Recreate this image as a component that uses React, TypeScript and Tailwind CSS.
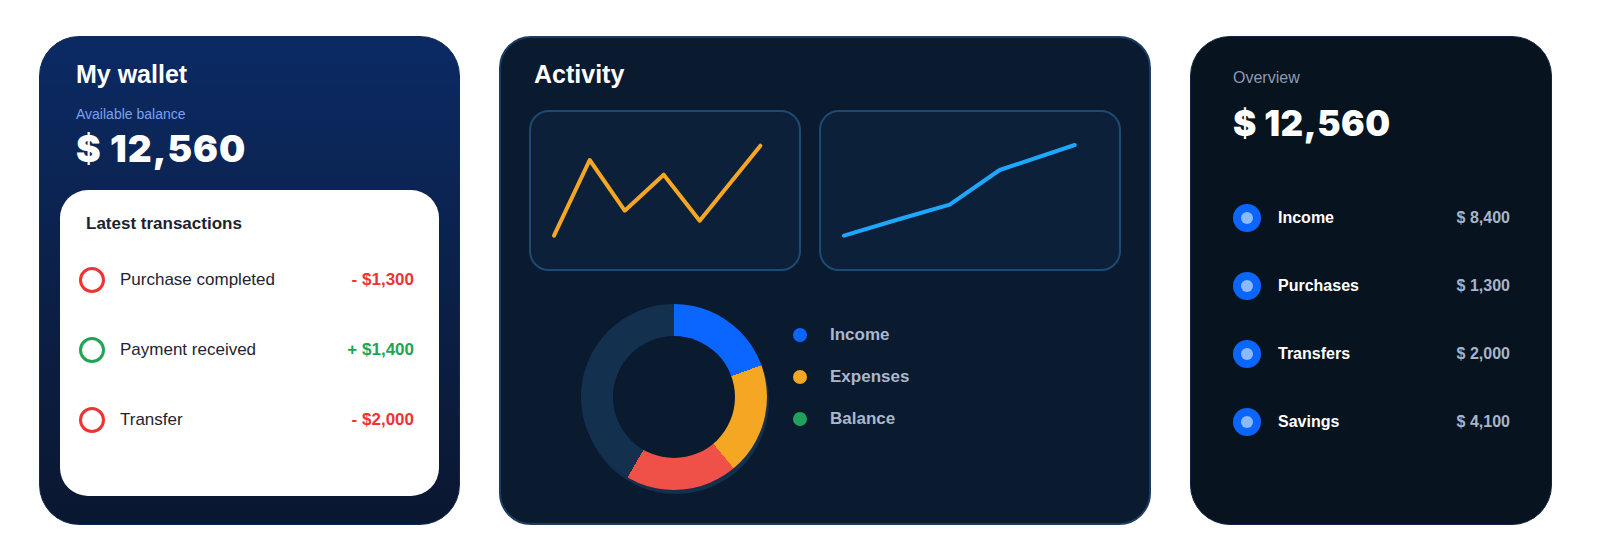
import React from 'react';

const transactions = [
  { label: 'Purchase completed', amount: '- $1,300', tone: 'red' },
  { label: 'Payment received', amount: '+ $1,400', tone: 'green' },
  { label: 'Transfer', amount: '- $2,000', tone: 'red' },
];

const overview = [
  { label: 'Income', amount: '$ 8,400' },
  { label: 'Purchases', amount: '$ 1,300' },
  { label: 'Transfers', amount: '$ 2,000' },
  { label: 'Savings', amount: '$ 4,100' },
];

const legend = [
  { label: 'Income', dot: 'bg-[#0a66ff]' },
  { label: 'Expenses', dot: 'bg-[#f5a623]' },
  { label: 'Balance', dot: 'bg-[#1fa35c]' },
];

function WalletCard() {
  return (
    <div className="flex h-[489px] w-[421px] shrink-0 flex-col rounded-[40px] border border-[#0f2a55] bg-gradient-to-b from-[#0b2a64] to-[#0a1730] px-[20px]">
      <div className="h-[153px] pl-[16px] pt-[22px]">
        <h2 className="text-[25px] font-bold leading-[30px] text-white">My wallet</h2>
        <p className="mt-[15px] text-[14px] leading-[20px] text-[#79a2f2]">Available balance</p>
        <p className="mt-[5px] font-['Inter',sans-serif] text-[37px] font-black leading-[40px] tracking-[1px] text-white">$ 12,560</p>
      </div>

      {/* transactions panel */}
      <div className="h-[306px] rounded-[28px] bg-white pt-[24px]">
        <h3 className="pl-[26px] text-[17px] font-bold leading-[20px] text-[#1c2230]">Latest transactions</h3>
        <div className="mt-[11px]">
          {transactions.map((t) => (
            <div key={t.label} className="flex h-[70px] items-center pl-[19px] pr-[25px]">
              <span
                className={
                  t.tone === 'red'
                    ? 'h-[26px] w-[26px] rounded-full border-[3px] border-[#ee3333]'
                    : 'h-[26px] w-[26px] rounded-full border-[3px] border-[#21a454]'
                }
              />
              <span className="ml-[15px] text-[17px] text-[#1f2430]">{t.label}</span>
              <span
                className={
                  t.tone === 'red'
                    ? 'ml-auto text-[17px] font-bold text-[#ee3333]'
                    : 'ml-auto text-[17px] font-bold text-[#21a454]'
                }
              >
                {t.amount}
              </span>
            </div>
          ))}
        </div>
      </div>
    </div>
  );
}

function ActivityCard() {
  return (
    <div className="h-[489px] w-[652px] shrink-0 rounded-[32px] border-2 border-[#1c3d61] bg-[#0a1a2f]">
      <h2 className="pl-[33px] pt-[21px] text-[25px] font-bold leading-[30px] text-white">Activity</h2>

      <div className="ml-[28px] mt-[21px] flex gap-[18px]">
        <div className="h-[161px] w-[272px] rounded-[20px] border-2 border-[#1d4a73] bg-[#0c2139]">
          <svg width="268" height="157" viewBox="0 0 268 157">
            <polyline
              points="23,123.7 58.7,48 93.7,98.7 132.7,62.7 168.7,108.7 229.4,33.7"
              fill="none"
              stroke="#f5a623"
              strokeWidth="4"
              strokeLinecap="round"
              strokeLinejoin="round"
            />
          </svg>
        </div>
        <div className="h-[161px] w-[302px] rounded-[20px] border-2 border-[#1d4a73] bg-[#0c2139]">
          <svg width="298" height="157" viewBox="0 0 298 157">
            <polyline
              points="23,123.7 78.7,107 128.7,92.7 178.7,58 253.7,33"
              fill="none"
              stroke="#1ea7ff"
              strokeWidth="4"
              strokeLinecap="round"
              strokeLinejoin="round"
            />
          </svg>
        </div>
      </div>

      <div className="ml-[80px] mt-[33px] flex items-start">
        <div className="flex h-[186px] w-[186px] items-center justify-center rounded-full bg-[conic-gradient(#0a66ff_0deg_70deg,#f5a623_70deg_140deg,#ef5047_140deg_210deg,#13304f_210deg_360deg)] shadow-[2px_4px_0_#13304f]">
          <div className="h-[122px] w-[122px] rounded-full bg-[#0a1a2f]" />
        </div>
        <div className="ml-[26px] mt-[10px]">
          {legend.map((l) => (
            <div key={l.label} className="flex h-[42px] items-center">
              <span className={`h-[14px] w-[14px] rounded-full ${l.dot}`} />
              <span className="ml-[23px] text-[17px] font-bold text-[#a9b8ce]">{l.label}</span>
            </div>
          ))}
        </div>
      </div>
    </div>
  );
}

function OverviewCard() {
  return (
    <div className="h-[489px] w-[362px] shrink-0 rounded-[40px] border border-[#0f2744] bg-[#07131f] pl-[42px] pr-[41px] pt-[31px]">
      <p className="text-[16px] leading-[20px] text-[#8b9bb0]">Overview</p>
      <p className="mt-[15px] font-['Inter',sans-serif] text-[35px] font-black leading-[40px] tracking-[0.5px] text-white">$ 12,560</p>

      <div className="mt-[41px]">
        {overview.map((o) => (
          <div key={o.label} className="flex h-[68px] items-center">
            <span className="flex h-[28px] w-[28px] items-center justify-center rounded-full bg-[#0a66ff]">
              <span className="h-[12px] w-[12px] rounded-full bg-[#8cbaff]" />
            </span>
            <span className="ml-[17px] text-[16px] font-bold text-white">{o.label}</span>
            <span className="ml-auto text-[16px] font-bold text-[#a8b5c7]">{o.amount}</span>
          </div>
        ))}
      </div>
    </div>
  );
}

export default function App() {
  return (
    <div className="flex h-[560px] w-[1600px] items-center gap-[39px] bg-white pl-[39px] font-['Liberation_Sans',Arial,sans-serif]">
      <WalletCard />
      <ActivityCard />
      <OverviewCard />
    </div>
  );
}
